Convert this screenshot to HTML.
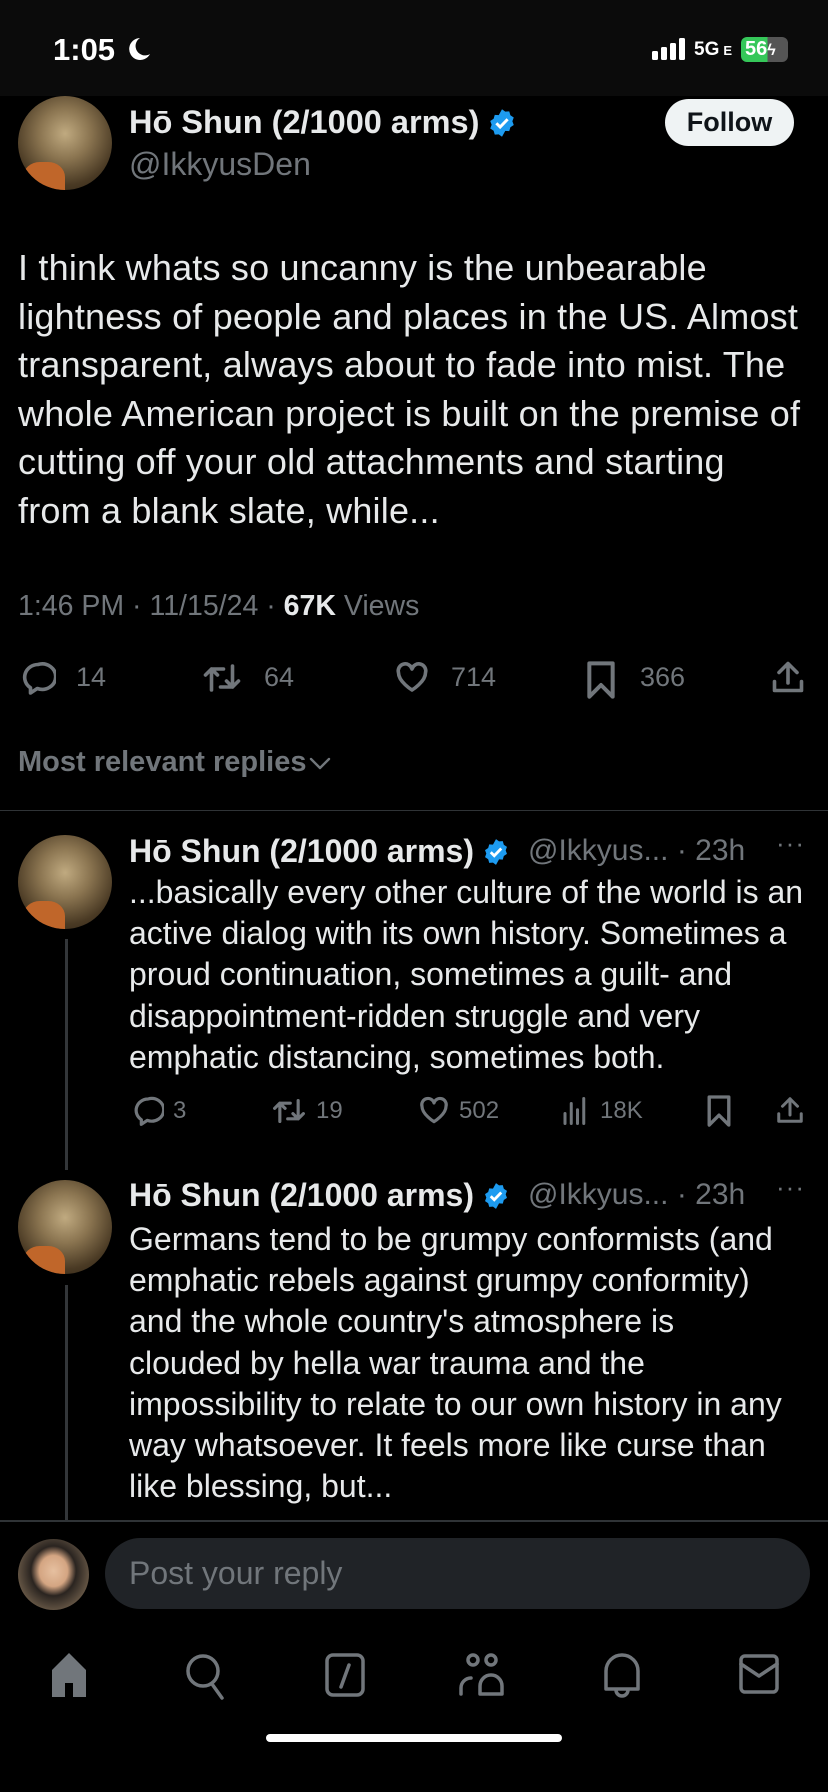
<!DOCTYPE html>
<html><head><meta charset="utf-8"><style>
*{margin:0;padding:0;box-sizing:border-box}
body{width:828px;height:1792px;background:#000;position:relative;overflow:hidden;font-family:"Liberation Sans",sans-serif;color:#e7e9ea}
.a{position:absolute;white-space:nowrap}
.g{color:#71767b}
.av{position:absolute;border-radius:50%;background:radial-gradient(circle at 50% 40%,#c0aa80 0%,#8a7450 35%,#4a3a24 70%,#2a2014 100%);overflow:hidden}
.av:after{content:"";position:absolute;left:5%;bottom:-10%;width:45%;height:40%;background:#c0662a;border-radius:40% 40% 0 0}
.body{font-size:36px;line-height:48.6px;letter-spacing:0.2px}
.rb{font-size:32px;line-height:41.2px;letter-spacing:0}
svg{position:absolute}
.ic{fill:none;stroke:#71767b;stroke-width:2.4;stroke-linecap:round;stroke-linejoin:round}
.nm{display:flex;align-items:center;gap:8px}
.nm svg{position:static}
</style></head><body>
<div class="a" style="left:0;top:0;width:828px;height:96px;background:#0b0b0b"></div>
<div class="a" style="left:53px;top:32px;font-size:31px;font-weight:bold;color:#fff">1:05</div>
<svg style="left:126px;top:36px" width="26" height="26" viewBox="0 0 26 26"><path d="M14 2A11 11 0 1 0 24 18A9 9 0 0 1 14 2Z" fill="#fff"/></svg>
<svg style="left:652px;top:38px" width="40" height="22"><rect x="0" y="13" width="6" height="9" rx="1.5" fill="#fff"/><rect x="9" y="9" width="6" height="13" rx="1.5" fill="#fff"/><rect x="18" y="5" width="6" height="17" rx="1.5" fill="#fff"/><rect x="27" y="0" width="6" height="22" rx="1.5" fill="#fff"/></svg>
<div class="a" style="left:694px;top:39px;font-size:19px;font-weight:bold;color:#fff">5G<span style="font-size:13px;margin-left:4px">E</span></div>
<div class="a" style="left:741px;top:37px;width:47px;height:25px;border-radius:6px;background:linear-gradient(90deg,#35c759 56%,#555 56%);font-size:20px;font-weight:bold;color:#fff;padding-left:4px;line-height:25px">56<span style="font-size:16px">ϟ</span></div>

<div class="av" style="left:18px;top:96px;width:94px;height:94px"></div>
<div class="a nm" style="left:129px;top:104px;font-size:32.5px;font-weight:bold">Hō Shun (2/1000 arms)<svg width="30" height="30" viewBox="0 0 24 24"><path d="M12 1l2.6 1.9 3.2-.2.9 3.1 2.7 1.8-1.1 3 1.1 3-2.7 1.8-.9 3.1-3.2-.2L12 23l-2.6-1.9-3.2.2-.9-3.1-2.7-1.8 1.1-3-1.1-3 2.7-1.8.9-3.1 3.2.2z" fill="#1d9bf0"/><path d="M7.5 12.2l3 3 6-6.2" fill="none" stroke="#fff" stroke-width="2.4"/></svg></div>
<div class="a g" style="left:129px;top:146px;font-size:32px">@IkkyusDen</div>
<div class="a" style="left:665px;top:99px;width:129px;height:47px;border-radius:24px;background:#eff3f4;color:#0f1419;font-size:27px;font-weight:bold;text-align:center;line-height:47px">Follow</div>

<div class="a body" style="left:18px;top:244px">I think whats so uncanny is the unbearable<br>lightness of people and places in the US. Almost<br>transparent, always about to fade into mist. The<br>whole American project is built on the premise of<br>cutting off your old attachments and starting<br>from a blank slate, while...</div>

<div class="a g" style="left:18px;top:590px;font-size:28.5px">1:46 PM · 11/15/24 · <b style="color:#e7e9ea">67K</b> Views</div>

<svg class="ic" style="left:20px;top:660px" width="36" height="36" viewBox="0 0 24 24"><path d="M12 3a9 8.5 0 0 0-5 15.5L7 22l4.5-3A9 8.5 0 1 0 12 3z"/></svg>
<div class="a g" style="left:76px;top:662px;font-size:27px">14</div>
<svg class="ic" style="left:202px;top:660px" width="40" height="36" viewBox="0 0 26 24"><path d="M6 20V6h8M2 10l4-4 4 4M20 4v14h-8M16 14l4 4 4-4"/></svg>
<div class="a g" style="left:264px;top:662px;font-size:27px">64</div>
<svg class="ic" style="left:393px;top:660px" width="38" height="36" viewBox="0 0 24 24"><path d="M12 20s-9-5.5-9-11.5A4.5 4.5 0 0 1 12 6a4.5 4.5 0 0 1 9 2.5C21 14.5 12 20 12 20z"/></svg>
<div class="a g" style="left:451px;top:662px;font-size:27px">714</div>
<svg class="ic" style="left:584px;top:660px" width="34" height="40" viewBox="0 0 20 24"><path d="M3 2h14v20l-7-7-7 7z"/></svg>
<div class="a g" style="left:640px;top:662px;font-size:27px">366</div>
<svg class="ic" style="left:770px;top:658px" width="36" height="38" viewBox="0 0 24 24"><path d="M12 3v13M6 9l6-6 6 6M3 15v6h18v-6"/></svg>

<div class="a g" style="left:18px;top:746px;font-size:29px;font-weight:bold">Most relevant replies</div>
<svg class="ic" style="left:308px;top:754px" width="24" height="18" viewBox="0 0 24 18"><path d="M3 5l9 9 9-9"/></svg>
<div class="a" style="left:0;top:810px;width:828px;height:1px;background:#2f3336"></div>

<!-- reply 1 -->
<div class="av" style="left:18px;top:835px;width:94px;height:94px"></div>
<div class="a" style="left:65px;top:939px;width:3px;height:231px;background:#333639"></div>
<div class="a nm" style="left:129px;top:833px;font-size:32px;font-weight:bold">Hō Shun (2/1000 arms)<svg width="28" height="28" viewBox="0 0 24 24"><path d="M12 1l2.6 1.9 3.2-.2.9 3.1 2.7 1.8-1.1 3 1.1 3-2.7 1.8-.9 3.1-3.2-.2L12 23l-2.6-1.9-3.2.2-.9-3.1-2.7-1.8 1.1-3-1.1-3 2.7-1.8.9-3.1 3.2.2z" fill="#1d9bf0"/><path d="M7.5 12.2l3 3 6-6.2" fill="none" stroke="#fff" stroke-width="2.4"/></svg></div>
<div class="a g" style="left:528px;top:834px;font-size:30px">@Ikkyus... · 23h</div>
<div class="a g" style="left:776px;top:828px;font-size:26px;letter-spacing:1px">···</div>
<div class="a rb" style="left:129px;top:872px">...basically every other culture of the world is an<br>active dialog with its own history. Sometimes a<br>proud continuation, sometimes a guilt- and<br>disappointment-ridden struggle and very<br>emphatic distancing, sometimes both.</div>

<svg class="ic" style="left:132px;top:1095px" width="32" height="32" viewBox="0 0 24 24"><path d="M12 3a9 8.5 0 0 0-5 15.5L7 22l4.5-3A9 8.5 0 1 0 12 3z"/></svg>
<div class="a g" style="left:173px;top:1097px;font-size:24px">3</div>
<svg class="ic" style="left:272px;top:1095px" width="34" height="32" viewBox="0 0 26 24"><path d="M6 20V6h8M2 10l4-4 4 4M20 4v14h-8M16 14l4 4 4-4"/></svg>
<div class="a g" style="left:316px;top:1097px;font-size:24px">19</div>
<svg class="ic" style="left:418px;top:1095px" width="32" height="32" viewBox="0 0 24 24"><path d="M12 20s-9-5.5-9-11.5A4.5 4.5 0 0 1 12 6a4.5 4.5 0 0 1 9 2.5C21 14.5 12 20 12 20z"/></svg>
<div class="a g" style="left:459px;top:1097px;font-size:24px">502</div>
<svg class="ic" style="left:560px;top:1095px" width="30" height="32" viewBox="0 0 24 24"><path d="M4 14v8M9 6v16M14 11v11M19 2v20"/></svg>
<div class="a g" style="left:600px;top:1097px;font-size:24px">18K</div>
<svg class="ic" style="left:705px;top:1094px" width="28" height="34" viewBox="0 0 20 24"><path d="M3 2h14v20l-7-7-7 7z"/></svg>
<svg class="ic" style="left:775px;top:1094px" width="30" height="32" viewBox="0 0 24 24"><path d="M12 3v13M6 9l6-6 6 6M3 15v6h18v-6"/></svg>

<!-- reply 2 -->
<div class="av" style="left:18px;top:1180px;width:94px;height:94px"></div>
<div class="a" style="left:65px;top:1285px;width:3px;height:236px;background:#333639"></div>
<div class="a nm" style="left:129px;top:1177px;font-size:32px;font-weight:bold">Hō Shun (2/1000 arms)<svg width="28" height="28" viewBox="0 0 24 24"><path d="M12 1l2.6 1.9 3.2-.2.9 3.1 2.7 1.8-1.1 3 1.1 3-2.7 1.8-.9 3.1-3.2-.2L12 23l-2.6-1.9-3.2.2-.9-3.1-2.7-1.8 1.1-3-1.1-3 2.7-1.8.9-3.1 3.2.2z" fill="#1d9bf0"/><path d="M7.5 12.2l3 3 6-6.2" fill="none" stroke="#fff" stroke-width="2.4"/></svg></div>
<div class="a g" style="left:528px;top:1178px;font-size:30px">@Ikkyus... · 23h</div>
<div class="a g" style="left:776px;top:1172px;font-size:26px;letter-spacing:1px">···</div>
<div class="a rb" style="left:129px;top:1219px">Germans tend to be grumpy conformists (and<br>emphatic rebels against grumpy conformity)<br>and the whole country's atmosphere is<br>clouded by hella war trauma and the<br>impossibility to relate to our own history in any<br>way whatsoever. It feels more like curse than<br>like blessing, but...</div>

<div class="a" style="left:0;top:1520px;width:828px;height:2px;background:#2f3336"></div>
<div class="a" style="left:18px;top:1539px;width:71px;height:71px;border-radius:50%;background:radial-gradient(ellipse at 50% 45%,#e6c0a0 0%,#d4a582 28%,#2a2420 45%,#6a5a48 75%,#8a7a60 100%)"></div>
<div class="a" style="left:105px;top:1538px;width:705px;height:71px;border-radius:36px;background:#202327"></div>
<div class="a g" style="left:129px;top:1555px;font-size:32px">Post your reply</div>

<svg style="left:48px;top:1650px" width="42" height="48" viewBox="0 0 42 48"><path d="M21 3L4 20v27h13V33h8v14h13V20z" fill="#71767b"/></svg>
<svg class="ic" style="left:184px;top:1650px;stroke-width:3.5" width="46" height="50" viewBox="0 0 46 50"><circle cx="19" cy="21" r="15"/><path d="M28 34l10 14"/></svg>
<svg class="ic" style="left:324px;top:1652px;stroke-width:3.5" width="42" height="46" viewBox="0 0 42 46"><rect x="3" y="3" width="36" height="40" rx="6"/><path d="M25 13l-8 22"/></svg>
<svg class="ic" style="left:458px;top:1650px;stroke-width:3.5" width="50" height="50" viewBox="0 0 50 50"><circle cx="15" cy="10" r="5"/><circle cx="33" cy="10" r="5"/><path d="M3 44v-6a10 10 0 0 1 10-10M22 44V36a11 11 0 0 1 22 0v8z"/></svg>
<svg class="ic" style="left:602px;top:1650px;stroke-width:3.5" width="40" height="50" viewBox="0 0 40 50"><path d="M4 39V21a16 16 0 0 1 32 0v18zM14 40a6 6 0 0 0 12 0"/></svg>
<svg class="ic" style="left:738px;top:1652px;stroke-width:3.5" width="42" height="44" viewBox="0 0 42 44"><rect x="3" y="4" width="36" height="36" rx="4"/><path d="M3 12l18 12 18-12"/></svg>

<div class="a" style="left:266px;top:1734px;width:296px;height:8px;border-radius:4px;background:#fff"></div>
</body></html>
